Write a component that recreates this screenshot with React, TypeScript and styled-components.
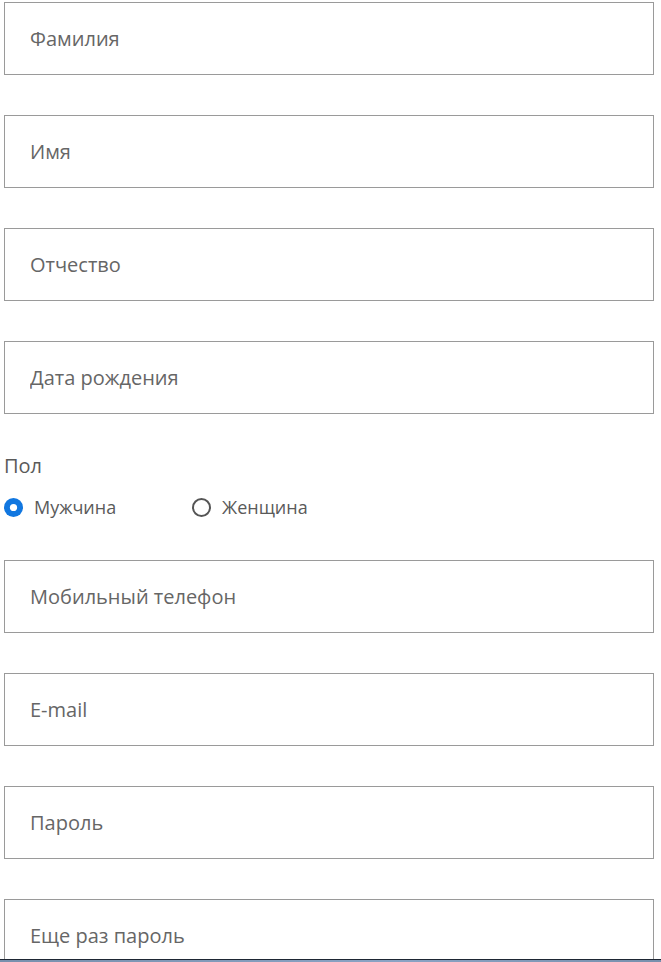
import React from "react";
import styled, { createGlobalStyle } from "styled-components";

const Global = createGlobalStyle`
  html, body { margin: 0; padding: 0; background: #fff; overflow: hidden; }
  body { font-family: "Open Sans", "Noto Sans", sans-serif; }
  * { box-sizing: border-box; }
`;

const Form = styled.form`
  display: flex;
  flex-direction: column;
  gap: 40px;
  padding: 2px 7px 0 4px;
`;

const Field = styled.input`
  display: block;
  width: 100%;
  height: 73px;
  border: 1px solid #9a9a9a;
  border-radius: 0;
  padding: 0 0 0 25px;
  font-family: "Open Sans", "Noto Sans", sans-serif;
  font-size: 20px;
  color: #555;
  background: #fff;
  outline: none;
  &::placeholder { color: #666; opacity: 1; }
`;

const Gender = styled.div`
  display: flex;
  flex-direction: column;
  gap: 17px;
  padding-bottom: 1px;
`;

const GroupLabel = styled.div`
  font-size: 20px;
  line-height: 24px;
  color: #5a5a5a;
`;

const RadioRow = styled.div`
  display: flex;
  height: 24px;
  align-items: center;
`;

const RadioOption = styled.label`
  display: flex;
  align-items: center;
  gap: 11px;
  width: 188px;
  font-size: 18px;
  line-height: 24px;
  color: #5a5a5a;
  cursor: pointer;
`;

const Taskbar = styled.div`
  position: fixed;
  left: 0;
  right: 0;
  bottom: 0;
  height: 3px;
  border-top: 1px solid #1e2633;
  background: linear-gradient(90deg, #7890ad, #8aa3c4 60%, #7890ad);
`;

const RadioIcon = ({ checked }: { checked: boolean }) =>
  checked ? (
    <svg width="19" height="19" viewBox="0 0 19 19">
      <circle cx="9.5" cy="9.5" r="9.5" fill="#1177e0" />
      <circle cx="9.5" cy="9.5" r="3.6" fill="#fff" />
    </svg>
  ) : (
    <svg width="19" height="19" viewBox="0 0 19 19">
      <circle cx="9.5" cy="9.5" r="8.5" fill="#fff" stroke="#555" strokeWidth="2" />
    </svg>
  );

export default function App() {
  const [sex, setSex] = React.useState("m");
  return (
    <>
      <Global />
      <Form onSubmit={(e) => e.preventDefault()}>
        <Field placeholder="Фамилия" />
        <Field placeholder="Имя" />
        <Field placeholder="Отчество" />
        <Field placeholder="Дата рождения" />
        <Gender>
          <GroupLabel>Пол</GroupLabel>
          <RadioRow>
            <RadioOption onClick={() => setSex("m")}>
              <RadioIcon checked={sex === "m"} />
              Мужчина
            </RadioOption>
            <RadioOption onClick={() => setSex("f")}>
              <RadioIcon checked={sex === "f"} />
              Женщина
            </RadioOption>
          </RadioRow>
        </Gender>
        <Field placeholder="Мобильный телефон" />
        <Field placeholder="E-mail" />
        <Field placeholder="Пароль" type="password" />
        <Field placeholder="Еще раз пароль" type="password" />
      </Form>
      <Taskbar />
    </>
  );
}
